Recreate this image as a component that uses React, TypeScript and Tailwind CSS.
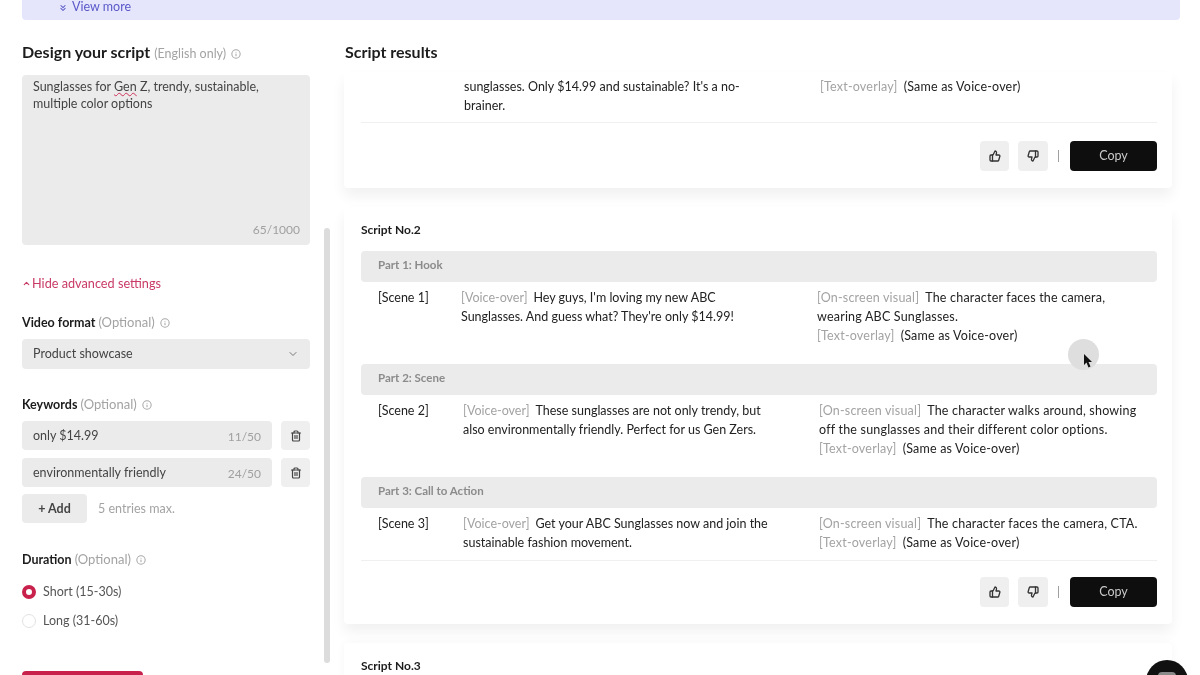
import { ChevronDown, ChevronUp, ChevronsDown, Info, ThumbsDown, ThumbsUp, Trash2 } from "lucide-react";

const Hint = () => <Info className="inline-block size-[10px] text-[#a8a8a8] ml-[5px] align-[-1px]" strokeWidth={2.5} />;

const Label = ({ title, note }: { title: string; note: string }) => (
  <div className="text-[12.5px] leading-[16px] font-bold text-[#1c1c1c]">
    {title} <span className="text-[13px] font-normal text-[#a3a3a3]">{note}</span>
    <Hint />
  </div>
);

const Actions = () => (
  <div className="flex justify-end items-center">
    <button className="w-[29px] h-[30px] rounded bg-[#efefef] flex items-center justify-center">
      <ThumbsUp className="size-[12px] text-[#333]" strokeWidth={2.6} />
    </button>
    <button className="w-[30px] h-[30px] rounded bg-[#efefef] flex items-center justify-center ml-[9px]">
      <ThumbsDown className="size-[12px] text-[#333]" strokeWidth={2.6} />
    </button>
    <div className="w-px h-[12px] bg-[#a0a0a0] ml-[10px] mr-[11px]" />
    <button className="w-[87px] h-[30px] rounded bg-[#0e0e0e] text-[#c9c9c9] text-[12.5px]">Copy</button>
  </div>
);

const Tag = ({ children }: { children: string }) => <span className="text-[#a3a3a3] mr-[6px]">{children}</span>;

const Part = ({ title, scene, voice, visual, indent }: { title: string; scene: string; voice: string; visual: string; indent: string }) => (
  <div>
    <div className="h-[31px] rounded-sm bg-[#ebebeb] flex items-center px-[17px] pb-[4px] text-[11.5px] font-bold text-[#8b8b8b]">{title}</div>
    <div className="flex pt-[6px] pb-[9px] pl-[17px] text-[12.5px] leading-[19px] text-[#222]">
      <div className={indent}>{scene}</div>
      <div className="w-[356px] pr-[44px]">
        <Tag>[Voice-over]</Tag>
        {voice}
      </div>
      <div className="flex-1 pr-[8px] tracking-[0.2px]">
        <Tag>[On-screen visual]</Tag>
        {visual}
        <br />
        <Tag>[Text-overlay]</Tag>
        (Same as Voice-over)
      </div>
    </div>
  </div>
);

export default function App() {
  return (
    <div className="relative h-[675px] overflow-hidden bg-white font-['Lato',sans-serif] blur-[0.5px]">
      <div className="ml-[22px] w-[1158px] h-[21px] -mt-px rounded-b bg-[#e5e6fc] pl-[36px] pb-[4px] flex items-center text-[12.5px] text-[#5a58c8]">
        <ChevronsDown className="size-[10px] mr-[4px]" strokeWidth={2.5} />
        View more
      </div>

      <div className="flex pl-[22px] pt-[22px]">
        <aside className="w-[288px] shrink-0">
          <h2 className="text-[16px] leading-[20px] font-bold text-[#1c1c1c]">
            Design your script <span className="text-[12.5px] font-normal text-[#a3a3a3]">(English only)</span>
            <Hint />
          </h2>
          <div className="relative h-[170px] mt-[11px] rounded-sm bg-[#ebebeb] px-[11px] py-[3px] text-[12.5px] leading-[17px] text-[#444]">
            Sunglasses for <span className="underline decoration-wavy decoration-1 decoration-[#d0305a]">Gen</span> Z, trendy, sustainable,
            <br />
            multiple color options
            <span className="absolute right-[10px] bottom-[7px] text-[12px] text-[#a0a0a0]">65/1000</span>
          </div>
          <div className="flex items-center mt-[30px] text-[12.7px] leading-[16px] text-[#c93a66]">
            <ChevronUp className="size-[9px] mr-[1px]" strokeWidth={3} />
            Hide advanced settings
          </div>
          <div className="mt-[23px]">
            <Label title="Video format" note="(Optional)" />
          </div>
          <div className="h-[30px] mt-[8px] rounded bg-[#ebebeb] flex items-center justify-between px-[11px] text-[12.5px] text-[#444]">
            Product showcase
            <ChevronDown className="size-[12px] text-[#777]" />
          </div>
          <div className="mt-[27px]">
            <Label title="Keywords" note="(Optional)" />
          </div>
          <div className="flex flex-col gap-[8px] mt-[8px]">
            {[["only $14.99", "11/50"], ["environmentally friendly", "24/50"]].map(([word, count]) => (
              <div key={word} className="flex gap-[9px]">
                <div className="flex-1 h-[29px] rounded bg-[#ebebeb] flex items-center justify-between px-[11px] pt-[2px] text-[12.5px] text-[#444]">
                  {word}
                  <span className="text-[12px] text-[#a0a0a0]">{count}</span>
                </div>
                <button className="size-[29px] rounded bg-[#efefef] flex items-center justify-center">
                  <Trash2 className="size-[12px] text-[#444]" strokeWidth={2.4} />
                </button>
              </div>
            ))}
          </div>
          <div className="flex items-center mt-[7px]">
            <button className="w-[65px] h-[29px] rounded bg-[#ebebeb] pt-px text-[12.5px] font-bold text-[#444]">+ Add</button>
            <span className="ml-[11px] pt-px text-[12.5px] text-[#a3a3a3]">5 entries max.</span>
          </div>
          <div className="mt-[28px]">
            <Label title="Duration" note="(Optional)" />
          </div>
          <div className="flex items-center mt-[16px] text-[12.5px] leading-[16px] text-[#555]">
            <span className="size-[14px] rounded-full border-[4px] border-[#c8224c] mr-[7px]" />
            Short (15-30s)
          </div>
          <div className="flex items-center mt-[13px] text-[12.5px] leading-[16px] text-[#555]">
            <span className="size-[14px] rounded-full border border-[#e2e2e2] mr-[7px]" />
            Long (31-60s)
          </div>
          <div className="h-[30px] w-[121px] mt-[42px] rounded bg-[#c8224c]" />
        </aside>

        <div className="w-[6px] h-[435px] mt-[186px] ml-[14px] shrink-0 rounded-full bg-[#dcdcdc]" />

        <main className="w-[828px] ml-[14px]">
          <h2 className="pl-px text-[16px] leading-[20px] font-bold text-[#1c1c1c]">Script results</h2>
          <div className="mt-[10px] flex flex-col gap-[19px]">
            <section className="h-[116px] rounded-b bg-white pl-[17px] pr-[15px] pt-[5px] shadow-[0_8px_14px_rgba(0,0,0,0.06)]">
              <div className="flex h-[46px] border-b border-[#f0f0f0] pl-[103px] text-[12.5px] leading-[19px] text-[#222]">
                <div className="w-[356px] pr-[44px]">sunglasses. Only $14.99 and sustainable? It's a no-brainer.</div>
                <div className="tracking-[0.2px]">
                  <Tag>[Text-overlay]</Tag>
                  (Same as Voice-over)
                </div>
              </div>
              <div className="mt-[18px]">
                <Actions />
              </div>
            </section>

            <section className="h-[417px] rounded bg-white pl-[17px] pr-[15px] pt-[15px] shadow-[0_8px_14px_rgba(0,0,0,0.06)]">
              <div className="text-[12px] leading-[16px] font-bold text-[#1c1c1c] mb-[13px]">Script No.2</div>
              <div className="flex flex-col gap-[10px]">
                <Part title="Part 1: Hook" scene="[Scene 1]" indent="w-[83px]" voice="Hey guys, I'm loving my new ABC Sunglasses. And guess what? They're only $14.99!" visual="The character faces the camera, wearing ABC Sunglasses." />
                <Part title="Part 2: Scene" scene="[Scene 2]" indent="w-[85px]" voice="These sunglasses are not only trendy, but also environmentally friendly. Perfect for us Gen Zers." visual="The character walks around, showing off the sunglasses and their different color options." />
                <Part title="Part 3: Call to Action" scene="[Scene 3]" indent="w-[85px]" voice="Get your ABC Sunglasses now and join the sustainable fashion movement." visual="The character faces the camera, CTA." />
              </div>
              <div className="-mt-px border-t border-[#f0f0f0] pt-[16px]">
                <Actions />
              </div>
            </section>

            <section className="h-[60px] rounded-t bg-white px-[17px] pt-[15px] shadow-[0_0_10px_rgba(0,0,0,0.04)]">
              <div className="text-[12px] leading-[16px] font-bold text-[#1c1c1c]">Script No.3</div>
            </section>
          </div>
        </main>
      </div>

      <div className="absolute left-[1068px] top-[339px] size-[31px] rounded-full bg-[#dedede]" />
      <svg className="absolute left-[1083px] top-[354px]" width="10" height="15" viewBox="0 0 10 15">
        <path d="M1 0 L1 11 L3.5 8.5 L5.5 13.5 L7.5 12.5 L5.5 8 L9 8 Z" fill="#111" />
      </svg>
      <div className="absolute left-[1146px] top-[660px] size-[42px] rounded-full bg-[#111] flex justify-center pt-[12px]">
        <div className="w-[18px] h-[12px] rounded-sm bg-[#8a8a8a]" />
      </div>
    </div>
  );
}
